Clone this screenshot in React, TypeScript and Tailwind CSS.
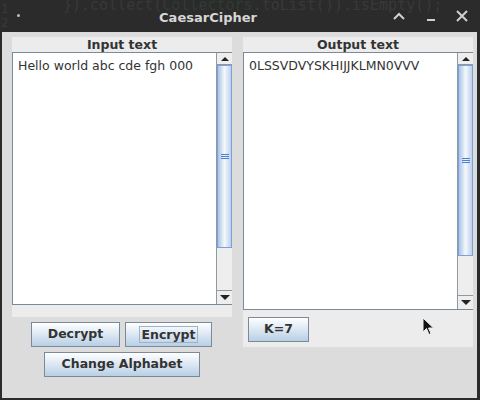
import React from "react";

const font = { fontFamily: '"DejaVu Sans", "Liberation Sans", sans-serif' };

function ScrollBar({ thumbTop, thumbHeight }: { thumbTop: number; thumbHeight: number }) {
    return (
        <div className="relative flex w-[16px] flex-col border-l border-[#8e99a4] bg-[#eeeeee]">
            <div className="flex h-[12px] items-center justify-center border-b border-[#8e99a4] bg-[#eeeeee]">
                <div className="h-0 w-0 border-x-[4px] border-b-[4px] border-x-transparent border-b-[#222]" />
            </div>
            <div className="relative flex-1">
                <div
                    className="absolute left-0 right-0 flex flex-col items-center justify-center gap-[1px] border border-[#7f9fd8] bg-gradient-to-r from-[#aac4e4] via-[#f4f8fc] to-[#bcd2ec]"
                    style={{ top: thumbTop, height: thumbHeight }}
                >
                    <div className="h-[1px] w-[8px] bg-[#4f7fd0]" />
                    <div className="h-[1px] w-[8px] bg-[#4f7fd0]" />
                    <div className="h-[1px] w-[8px] bg-[#4f7fd0]" />
                </div>
            </div>
            <div className="flex h-[14px] items-center justify-center border-t border-[#8e99a4] bg-[#eeeeee]">
                <div className="h-0 w-0 border-x-[5px] border-t-[5px] border-x-transparent border-t-[#222]" />
            </div>
        </div>
    );
}

function Button({ label, className, focused }: { label: string; className: string; focused?: boolean }) {
    return (
        <div
            className={`flex items-center justify-center border border-[#7a8a99] bg-gradient-to-b from-[#ffffff] to-[#b8cfe5] text-[12.5px] font-bold text-[#333] ${className}`}
        >
            <span className={focused ? "border border-[#9fb3c8] px-[1px] leading-[15px]" : ""}>{label}</span>
        </div>
    );
}

export default function App() {
    return (
        <div className="relative h-[400px] w-[480px] overflow-hidden bg-[#2b2b2b]" style={font}>
            {/* title bar */}
            <div className="relative h-[32px]">
                <div
                    className="absolute left-[63px] top-[-6px] whitespace-nowrap text-[15px] text-[#393939]"
                    style={{ fontFamily: '"DejaVu Sans Mono", monospace' }}
                >
                    {"}).collect("}
                    <span className="text-[#2f3b33]">Collectors</span>
                    {".toList()).isEmpty();"}
                </div>
                <div className="absolute left-[1px] top-[2px] text-[12px] leading-[14px] text-[#393939]">
                    1
                    <br />2
                </div>
                <div className="absolute left-[17px] top-[14px] h-[3px] w-[3px] rounded-full bg-[#bdbdbd]" />
                <div className="absolute left-0 right-[64px] top-[8px] text-center text-[13px] font-bold text-[#d6d6d6]">
                    CaesarCipher
                </div>
                <svg className="absolute left-[392px] top-[11px]" width="14" height="10" viewBox="0 0 14 10">
                    <path d="M2 8 L7 3 L12 8" stroke="#cfcfcf" strokeWidth="2" fill="none" />
                </svg>
                <div className="absolute left-[427px] top-[19px] h-[2px] w-[8px] bg-[#cfcfcf]" />
                <svg className="absolute left-[455px] top-[9px]" width="14" height="14" viewBox="0 0 14 14">
                    <path d="M2 2 L12 12 M12 2 L2 12" stroke="#cfcfcf" strokeWidth="2" fill="none" />
                </svg>
            </div>

            {/* window body */}
            <div className="ml-[2px] flex h-[366px] w-[475px] gap-[11px] bg-[#dcdcdc] pl-[10px] pt-[5px]">
                <div className="flex w-[220px] flex-col">
                    <div className="flex flex-col bg-[#ececec] pb-[12px]">
                        <div className="h-[15px] text-center text-[12.5px] font-bold leading-[15px] text-[#333]">
                            Input text
                        </div>
                        <div className="flex h-[253px] border border-[#7a8a99] border-r-0 bg-white">
                            <div className="flex-1 pl-[5px] pt-[4px] text-[12.5px] text-[#333]">
                                Hello world abc cde fgh 000
                            </div>
                            <ScrollBar thumbTop={0} thumbHeight={183} />
                        </div>
                    </div>
                    <div className="mt-[5px] flex gap-[5px] pl-[19px]">
                        <Button label="Decrypt" className="h-[25px] w-[89px]" />
                        <Button label="Encrypt" className="h-[25px] w-[87px]" focused />
                    </div>
                    <div className="mt-[5px] flex pl-[32px]">
                        <Button label="Change Alphabet" className="h-[25px] w-[156px]" />
                    </div>
                </div>

                <div className="flex w-[230px] flex-col">
                    <div className="flex flex-col bg-[#ececec]">
                        <div className="h-[15px] text-center text-[12.5px] font-bold leading-[15px] text-[#333]">
                            Output text
                        </div>
                        <div className="flex h-[258px] border border-[#7a8a99] border-r-0 bg-white">
                            <div className="flex-1 pl-[5px] pt-[4px] text-[12.5px] text-[#333]">
                                0LSSVDVYSKHIJJKLMN0VVV
                            </div>
                            <ScrollBar thumbTop={0} thumbHeight={191} />
                        </div>
                        <div className="h-[37px] pl-[5px] pt-[7px]">
                            <Button label="K=7" className="h-[25px] w-[61px]" />
                        </div>
                    </div>
                </div>
            </div>

            {/* mouse pointer */}
            <svg className="absolute left-[422px] top-[317px]" width="14" height="20" viewBox="0 0 14 20">
                <path d="M1 1 L1 15 L4.5 11.5 L7 17.5 L9 16.5 L6.5 11 L11.5 11 Z" fill="#111" stroke="#eee" strokeWidth="1" />
            </svg>
        </div>
    );
}
